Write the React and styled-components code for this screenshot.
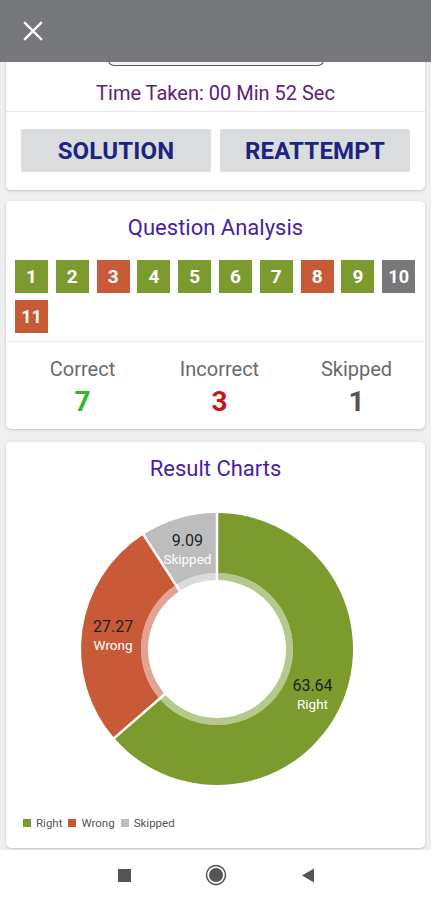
import React from "react"
import styled, { createGlobalStyle } from "styled-components"

const GlobalStyle = createGlobalStyle`
  html, body {
    margin: 0;
    padding: 0;
    background: #ffffff;
  }
  body {
    font-family: Roboto, "Noto Sans", Arial, sans-serif;
  }
  * { box-sizing: border-box; }
`

const colors = {
  right: "#7b9b2f",
  wrong: "#c95a38",
  skipped: "#bdbdbd",
  skippedBox: "#787878",
}

const Screen = styled.div`
  width: 431px;
  height: 900px;
  display: flex;
  flex-direction: column;
  overflow: hidden;
`

const TopBar = styled.div`
  height: 62px;
  flex-shrink: 0;
  background: #77787b;
  display: flex;
  align-items: center;
  padding-left: 23px;
  position: relative;
  z-index: 2;
`

const Content = styled.div`
  flex: 1;
  overflow: hidden;
  background: #efefef;
  padding: 0 6px;
  display: flex;
  flex-direction: column;
  gap: 11px;
`

const Card = styled.div`
  background: #ffffff;
  border-radius: 5px;
  box-shadow: 0 1px 3px rgba(0, 0, 0, 0.18);
  margin-top: ${(p) => p.$offset || 0}px;
`

const ScoreTab = styled.div`
  width: 216px;
  height: 14px;
  margin: 0 auto;
  border: 1.5px solid #5a5a5a;
  border-top: none;
  border-radius: 0 0 6px 6px;
  background: #f4f4f4;
`

const TimeRow = styled.div`
  padding: 15px 0 6px;
  text-align: center;
  font-size: 20px;
  line-height: 24px;
  color: #5e2275;
  border-bottom: 1.5px solid #e8e8e8;
`

const ButtonRow = styled.div`
  display: flex;
  gap: 9px;
  padding: 17px 15px 18px;
`

const ActionButton = styled.div`
  flex: 1;
  height: 43px;
  background: #dadcde;
  border-radius: 2px;
  display: flex;
  align-items: center;
  justify-content: center;
  font-size: 24px;
  font-weight: 700;
  color: #1b2480;
  letter-spacing: 0.2px;
`

const CardTitle = styled.div`
  padding-top: ${(p) => p.$top || 14}px;
  text-align: center;
  font-size: 22px;
  line-height: 26px;
  color: #4a1ea0;
`

const BoxGrid = styled.div`
  display: flex;
  flex-wrap: wrap;
  column-gap: 7.8px;
  row-gap: 7px;
  padding: 19px 9px 8px;
  border-bottom: 1.5px solid #e8e8e8;
`

const QBox = styled.div`
  width: 33px;
  height: 33px;
  background: ${(p) => colors[p.$state]};
  color: #ffffff;
  font-size: ${(p) => (p.$wide ? 18 : 19)}px;
  font-weight: 700;
  display: flex;
  align-items: center;
  justify-content: center;
`

const StatsRow = styled.div`
  display: grid;
  grid-template-columns: repeat(3, 1fr);
  padding: 15px 0 11px 8px;
`

const Stat = styled.div`
  display: flex;
  flex-direction: column;
  align-items: center;
  gap: 5px;
`

const StatLabel = styled.div`
  font-size: 20px;
  line-height: 24px;
  color: #6a6a6a;
`

const StatValue = styled.div`
  font-size: 28px;
  line-height: 32px;
  font-weight: 700;
  color: ${(p) => p.$color};
`

const ChartWrap = styled.div`
  display: flex;
  justify-content: center;
  padding-top: 19px;
`

const Legend = styled.div`
  display: flex;
  align-items: center;
  gap: 6px;
  padding: 19px 17px 18px;
  font-size: 11.5px;
  line-height: 14px;
  color: #555555;
`

const LegendItem = styled.div`
  display: flex;
  align-items: center;
  gap: 5px;
`

const Swatch = styled.span`
  width: 8px;
  height: 8px;
  background: ${(p) => p.$color};
`

const NavBar = styled.div`
  height: 50px;
  flex-shrink: 0;
  background: #ffffff;
  display: flex;
  align-items: center;
  justify-content: center;
  gap: 74px;
  padding-left: 2px;
`

const NavSquare = styled.div`
  width: 13px;
  height: 13px;
  background: #555555;
`

const questions = [
  "right", "right", "wrong", "right", "right", "right", "right",
  "wrong", "right", "skippedBox", "wrong",
]

const segments = [
  { name: "Right", value: 63.64, color: colors.right },
  { name: "Wrong", value: 27.27, color: colors.wrong },
  { name: "Skipped", value: 9.09, color: colors.skipped },
]

const CX = 211
const CY = 148

const polar = (r, deg) => {
  const a = ((deg - 90) * Math.PI) / 180
  return [CX + r * Math.cos(a), CY + r * Math.sin(a)]
}

const arcPath = (r1, r2, a0, a1) => {
  const large = a1 - a0 > 180 ? 1 : 0
  const [x0, y0] = polar(r2, a0)
  const [x1, y1] = polar(r2, a1)
  const [x2, y2] = polar(r1, a1)
  const [x3, y3] = polar(r1, a0)
  return `M${x0} ${y0} A${r2} ${r2} 0 ${large} 1 ${x1} ${y1} L${x2} ${y2} A${r1} ${r1} 0 ${large} 0 ${x3} ${y3} Z`
}

const Donut = () => {
  let start = 0
  const parts = segments.map((s) => {
    const sweep = (s.value / 100) * 360
    const p = { ...s, a0: start, a1: start + sweep }
    start += sweep
    return p
  })
  return (
    <svg width="419" height="296" viewBox="0 0 419 296">
      {parts.map((p) => (
        <g key={p.name}>
          <path d={arcPath(76, 136, p.a0, p.a1)} fill={p.color} />
          <path d={arcPath(69, 76, p.a0, p.a1)} fill={p.color} opacity="0.55" />
        </g>
      ))}
      {parts.map((p) => {
        const [x1, y1] = polar(68, p.a0)
        const [x2, y2] = polar(138, p.a0)
        return <line key={"s" + p.name} x1={x1} y1={y1} x2={x2} y2={y2} stroke="#fff" strokeWidth="2.5" />
      })}
      {parts.map((p) => {
        const [x, y] = polar(105, (p.a0 + p.a1) / 2)
        return (
          <g key={"t" + p.name} fontFamily="Roboto, Arial, sans-serif" textAnchor="middle">
            <text x={x} y={y - 2} fontSize="16" fill="#1e1e1e">{p.value.toFixed(2)}</text>
            <text x={x} y={y + 16} fontSize="13.5" fill="#ffffff">{p.name}</text>
          </g>
        )
      })}
    </svg>
  )
}

const App = () => (
  <Screen>
    <GlobalStyle />
    <TopBar>
      <svg width="20" height="20" viewBox="0 0 20 20">
        <path d="M2 2 L18 18 M18 2 L2 18" stroke="#fff" strokeWidth="2.4" strokeLinecap="square" />
      </svg>
    </TopBar>
    <Content>
      <Card $offset={-10}>
        <ScoreTab />
        <TimeRow>Time Taken: 00 Min 52 Sec</TimeRow>
        <ButtonRow>
          <ActionButton>SOLUTION</ActionButton>
          <ActionButton>REATTEMPT</ActionButton>
        </ButtonRow>
      </Card>

      <Card>
        <CardTitle>Question Analysis</CardTitle>
        <BoxGrid>
          {questions.map((q, i) => (
            <QBox key={i} $state={q} $wide={i >= 9}>{i + 1}</QBox>
          ))}
        </BoxGrid>
        <StatsRow>
          <Stat>
            <StatLabel>Correct</StatLabel>
            <StatValue $color="#2fb82a">7</StatValue>
          </Stat>
          <Stat>
            <StatLabel>Incorrect</StatLabel>
            <StatValue $color="#c8161b">3</StatValue>
          </Stat>
          <Stat>
            <StatLabel>Skipped</StatLabel>
            <StatValue $color="#555555">1</StatValue>
          </Stat>
        </StatsRow>
      </Card>

      <Card $offset={2}>
        <CardTitle>Result Charts</CardTitle>
        <ChartWrap>
          <Donut />
        </ChartWrap>
        <Legend>
          {segments.map((s) => (
            <LegendItem key={s.name}>
              <Swatch $color={s.color} />
              {s.name}
            </LegendItem>
          ))}
        </Legend>
      </Card>
    </Content>
    <NavBar>
      <NavSquare />
      <svg width="22" height="22" viewBox="0 0 22 22">
        <circle cx="11" cy="11" r="9.5" fill="none" stroke="#555" strokeWidth="1.5" />
        <circle cx="11" cy="11" r="7" fill="#555" />
      </svg>
      <svg width="14" height="15" viewBox="0 0 14 15">
        <path d="M13 0.5 L13 14.5 L1 7.5 Z" fill="#555" />
      </svg>
    </NavBar>
  </Screen>
)

export default App
